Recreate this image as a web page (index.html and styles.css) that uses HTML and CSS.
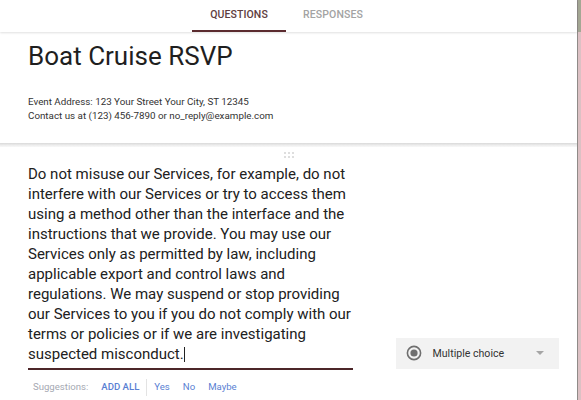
FILE: index.html
```html
<!DOCTYPE html>
<html>
<head>
<meta charset="utf-8">
<link rel="stylesheet" href="styles.css">
</head>
<body>
<div class="app">
  <div class="topbar">
    <div class="tab active">QUESTIONS</div>
    <div class="tab">RESPONSES</div>
  </div>
  <div class="header-card">
    <div class="title">Boat Cruise RSVP</div>
    <div class="desc">Event Address: 123 Your Street Your City, ST 12345<br>Contact us at (123) 456-7890 or no_reply@example.com</div>
  </div>
  <div class="sep"></div>
  <div class="q-card">
    <div class="handle">
      <svg width="10" height="6" viewBox="0 0 10 6"><g fill="#b5b5b5"><circle cx="1" cy="1" r="0.8"/><circle cx="5" cy="1" r="0.8"/><circle cx="9" cy="1" r="0.8"/><circle cx="1" cy="5" r="0.8"/><circle cx="5" cy="5" r="0.8"/><circle cx="9" cy="5" r="0.8"/></g></svg>
    </div>
    <div class="q-row">
      <div class="q-text">Do not misuse our Services, for example, do not<br>interfere with our Services or try to access them<br>using a method other than the interface and the<br>instructions that we provide. You may use our<br>Services only as permitted by law, including<br>applicable export and control laws and<br>regulations. We may suspend or stop providing<br>our Services to you if you do not comply with our<br>terms or policies or if we are investigating<br>suspected misconduct.<span class="caret"></span></div>
      <div class="type-select">
        <svg class="radio" width="16" height="16" viewBox="0 0 16 16"><circle cx="8" cy="8" r="6.6" fill="none" stroke="#6f6f6f" stroke-width="1.6"/><circle cx="8" cy="8" r="3.6" fill="#6f6f6f"/></svg>
        <span class="type-label">Multiple choice</span>
        <span class="arrow"></span>
      </div>
    </div>
    <div class="suggestions">
      <span class="sug-label">Suggestions:</span>
      <span class="sug-link strong">ADD ALL</span>
      <span class="sug-sep"></span>
      <span class="sug-link">Yes</span>
      <span class="sug-link gap">No</span>
      <span class="sug-link gap">Maybe</span>
    </div>
  </div>
</div>
<div class="rail"></div>
</body>
</html>
```
FILE: styles.css
```css
html, body {
  margin: 0;
  padding: 0;
  height: 400px;
  overflow: hidden;
  background: #fff;
}
body {
  display: flex;
  font-family: Roboto, "Liberation Sans", sans-serif;
}
.app {
  flex: 1;
  display: flex;
  flex-direction: column;
  min-width: 0;
}
.topbar {
  height: 32px;
  display: flex;
  padding-left: 192px;
  box-shadow: 0 1px 2px rgba(0,0,0,0.12);
  position: relative;
  z-index: 1;
}
.tab {
  width: 94px;
  box-sizing: border-box;
  text-align: center;
  font-size: 10.5px;
  font-weight: 500;
  line-height: 29px;
  color: #a3a3a3;
  letter-spacing: 0.1px;
}
.tab.active {
  color: #5e3d40;
  border-bottom: 2px solid #5b2b2f;
  height: 32px;
}
.header-card {
  padding: 9px 0 21px 28px;
}
.title {
  font-size: 26px;
  line-height: 30px;
  color: #1f1f1f;
}
.desc {
  margin-top: 24px;
  font-size: 9.8px;
  line-height: 13.5px;
  color: #333;
}
.sep {
  height: 4px;
  background: linear-gradient(#d9d9d9, #eeeeee 60%, #f8f8f8);
}
.q-card {
  padding: 0 18px 0 28px;
}
.handle {
  height: 16px;
  display: flex;
  justify-content: center;
  align-items: flex-start;
  padding-top: 5px;
  box-sizing: border-box;
  padding-left: 0;
  margin-left: -10px;
}
.handle svg {
  display: block;
}
.q-row {
  display: flex;
  align-items: flex-end;
  justify-content: space-between;
}
.q-text {
  width: 325px;
  white-space: nowrap;
  font-size: 15px;
  line-height: 20px;
  color: #212121;
  padding: 0.5px 0 4px;
  border-bottom: 2px solid #4c2629;
}
.caret {
  display: inline-block;
  width: 0;
  height: 15px;
  border-left: 1px solid #222;
  vertical-align: -3px;
}
.type-select {
  width: 163px;
  height: 31px;
  box-sizing: border-box;
  background: #f2f2f2;
  display: flex;
  align-items: center;
  padding: 0 15px 0 10px;
  margin-bottom: 1px;
}
.radio {
  display: block;
  flex: none;
}
.type-label {
  margin-left: 10.5px;
  font-size: 10.6px;
  color: #333;
  flex: 1;
}
.arrow {
  width: 0;
  height: 0;
  border-left: 4px solid transparent;
  border-right: 4px solid transparent;
  border-top: 4px solid #a5a5a5;
}
.suggestions {
  display: flex;
  align-items: center;
  margin-top: 9px;
  padding-left: 5px;
  font-size: 9.6px;
  line-height: 14px;
}
.sug-label {
  color: #a6a9b3;
}
.sug-link {
  color: #5a7fd3;
}
.sug-link.strong {
  margin-left: 13px;
  font-weight: 500;
}
.sug-sep {
  width: 0;
  height: 17px;
  border-left: 1px solid #e3e3e3;
  margin: 0 7px;
}
.sug-link.gap {
  margin-left: 13px;
}
.rail {
  width: 4px;
  flex: none;
  box-sizing: border-box;
  border-left: 1px solid #8f8b88;
  background: linear-gradient(#a4a794 0, #a4a794 32px, #dcc1c4 32px);
}
```
